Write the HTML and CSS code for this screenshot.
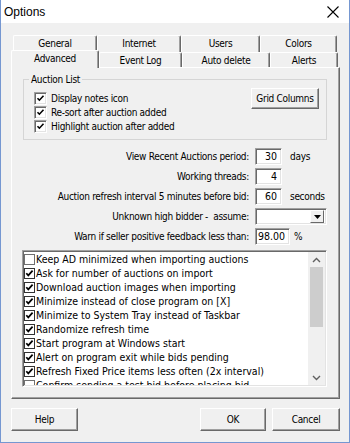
FILE: index.html
```html
<!DOCTYPE html>
<html>
<head>
<meta charset="utf-8">
<link rel="stylesheet" href="styles.css">
</head>
<body>
<div class="window">
  <div class="titlebar">
    <span class="title">Options</span>
    <svg class="close" width="12" height="12" viewBox="0 0 12 12"><path d="M0.5 0.5 L11.5 11.5 M11.5 0.5 L0.5 11.5" stroke="#000" stroke-width="1.1" fill="none"/></svg>
  </div>
  <div class="body">
    <div class="tabrow back">
      <div class="tab t-general">General</div>
      <div class="tab t-internet">Internet</div>
      <div class="tab t-users">Users</div>
      <div class="tab t-colors">Colors</div>
    </div>
    <div class="tabrow front">
      <div class="tab sel t-advanced">Advanced</div>
      <div class="tab t-eventlog">Event Log</div>
      <div class="tab t-autodelete">Auto delete</div>
      <div class="tab t-alerts">Alerts</div>
    </div>
    <div class="panel">
      <fieldset class="group">
        <legend>Auction List</legend>
        <div class="group-inner">
          <div class="checks">
            <div class="chk"><span class="box3d"><svg width="9" height="9" viewBox="0 0 9 9"><path d="M1.5 4.2 L3.4 6.2 L7.5 1.8" stroke="#000" stroke-width="1.6" fill="none"/></svg></span>Display notes icon</div>
            <div class="chk"><span class="box3d"><svg width="9" height="9" viewBox="0 0 9 9"><path d="M1.5 4.2 L3.4 6.2 L7.5 1.8" stroke="#000" stroke-width="1.6" fill="none"/></svg></span>Re-sort after auction added</div>
            <div class="chk"><span class="box3d"><svg width="9" height="9" viewBox="0 0 9 9"><path d="M1.5 4.2 L3.4 6.2 L7.5 1.8" stroke="#000" stroke-width="1.6" fill="none"/></svg></span>Highlight auction after added</div>
          </div>
          <button class="btn grid-btn">Grid Columns</button>
        </div>
      </fieldset>

      <div class="form">
        <div class="frow"><span class="flabel">View Recent Auctions period:</span><span class="field w-small">30</span><span class="unit">days</span></div>
        <div class="frow"><span class="flabel">Working threads:</span><span class="field w-small">4</span></div>
        <div class="frow"><span class="flabel">Auction refresh interval 5 minutes before bid:</span><span class="field w-small">60</span><span class="unit">seconds</span></div>
        <div class="frow"><span class="flabel">Unknown high bidder -&nbsp; assume:</span><span class="field combo"><span class="combo-btn"><svg width="7" height="4" viewBox="0 0 7 4"><path d="M0 0 H7 L3.5 4 Z" fill="#000"/></svg></span></span></div>
        <div class="frow"><span class="flabel">Warn if seller positive feedback less than:</span><span class="field w-pct">98.00</span><span class="unit pct">%</span></div>
      </div>

      <div class="listbox">
        <div class="items">
          <div class="item"><span class="lbox off"></span>Keep AD minimized when importing auctions</div>
          <div class="item"><span class="lbox"><svg width="9" height="9" viewBox="0 0 9 9"><path d="M1.3 4.2 L3.3 6.4 L7.6 1.6" stroke="#000" stroke-width="1.7" fill="none"/></svg></span>Ask for number of auctions on import</div>
          <div class="item"><span class="lbox"><svg width="9" height="9" viewBox="0 0 9 9"><path d="M1.3 4.2 L3.3 6.4 L7.6 1.6" stroke="#000" stroke-width="1.7" fill="none"/></svg></span>Download auction images when importing</div>
          <div class="item"><span class="lbox"><svg width="9" height="9" viewBox="0 0 9 9"><path d="M1.3 4.2 L3.3 6.4 L7.6 1.6" stroke="#000" stroke-width="1.7" fill="none"/></svg></span>Minimize instead of close program on [X]</div>
          <div class="item"><span class="lbox"><svg width="9" height="9" viewBox="0 0 9 9"><path d="M1.3 4.2 L3.3 6.4 L7.6 1.6" stroke="#000" stroke-width="1.7" fill="none"/></svg></span>Minimize to System Tray instead of Taskbar</div>
          <div class="item"><span class="lbox"><svg width="9" height="9" viewBox="0 0 9 9"><path d="M1.3 4.2 L3.3 6.4 L7.6 1.6" stroke="#000" stroke-width="1.7" fill="none"/></svg></span>Randomize refresh time</div>
          <div class="item"><span class="lbox"><svg width="9" height="9" viewBox="0 0 9 9"><path d="M1.3 4.2 L3.3 6.4 L7.6 1.6" stroke="#000" stroke-width="1.7" fill="none"/></svg></span>Start program at Windows start</div>
          <div class="item"><span class="lbox"><svg width="9" height="9" viewBox="0 0 9 9"><path d="M1.3 4.2 L3.3 6.4 L7.6 1.6" stroke="#000" stroke-width="1.7" fill="none"/></svg></span>Alert on program exit while bids pending</div>
          <div class="item"><span class="lbox"><svg width="9" height="9" viewBox="0 0 9 9"><path d="M1.3 4.2 L3.3 6.4 L7.6 1.6" stroke="#000" stroke-width="1.7" fill="none"/></svg></span>Refresh Fixed Price items less often (2x interval)</div>
          <div class="item"><span class="lbox off"></span>Confirm sending a test bid before placing bid</div>
        </div>
        <div class="vscroll">
          <div class="sb-btn"><svg width="9" height="6" viewBox="0 0 9 6"><path d="M1 5 L4.5 1.5 L8 5" stroke="#606060" stroke-width="1.4" fill="none"/></svg></div>
          <div class="thumb"></div>
          <div class="sb-track"></div>
          <div class="sb-btn"><svg width="9" height="6" viewBox="0 0 9 6"><path d="M1 1 L4.5 4.5 L8 1" stroke="#606060" stroke-width="1.4" fill="none"/></svg></div>
        </div>
      </div>
    </div>

    <div class="buttons">
      <button class="btn b-help">Help</button>
      <button class="btn b-ok">OK</button>
      <button class="btn b-cancel">Cancel</button>
    </div>
  </div>
</div>
</body>
</html>
```
FILE: styles.css
```css
html, body {
  margin: 0;
  padding: 0;
  background: #ffffff;
}

.window {
  width: 350px;
  height: 443px;
  box-sizing: border-box;
  border: 1px solid #7597d1;
  border-top: none;
  display: flex;
  flex-direction: column;
  font-family: "DejaVu Sans Condensed", "Liberation Sans", Arial, sans-serif;
  font-size: 10px;
  letter-spacing: -0.3px;
  color: #000;
}

.titlebar {
  height: 23px;
  flex: none;
  background: #ffffff;
  display: flex;
  align-items: center;
  padding-left: 3px;
}

.title {
  font-family: "Liberation Sans", Arial, sans-serif;
  font-size: 12px;
  letter-spacing: 0;
}

.close {
  margin-left: auto;
  margin-right: 10px;
}

.body {
  flex: 1;
  background: #f0f0f0;
  padding: 12px 9px 0 10px;
  display: flex;
  flex-direction: column;
}

/* Tabs */
.tabrow {
  display: flex;
  flex: none;
}

.tabrow.back {
  height: 17px;
  padding-left: 2px;
}

.tabrow.front {
  height: 15px;
  align-items: flex-start;
}

.tab {
  box-sizing: border-box;
  height: 17px;
  border-top: 1px solid #ffffff;
  border-left: 1px solid #ffffff;
  border-right: 1px solid #696969;
  border-radius: 2px 2px 0 0;
  box-shadow: inset -1px 0 #a0a0a0;
  background: #f0f0f0;
  display: flex;
  align-items: center;
  justify-content: center;
  padding-bottom: 1px;
}

.front .tab {
  height: 15px;
  padding-bottom: 0;
}

.front .tab.sel {
  height: 18px;
  margin-top: -2px;
  position: relative;
  z-index: 1;
  padding-bottom: 2px;
}

.t-general { width: 84px; }
.t-internet { width: 84px; }
.t-users { width: 79px; }
.t-colors { width: 77px; }
.t-advanced { width: 88px; }
.t-eventlog { width: 83px; }
.t-autodelete { width: 88px; }
.t-alerts { width: 68px; }

/* Panel */
.panel {
  flex: none;
  height: 332px;
  box-sizing: border-box;
  border: 1px solid #ffffff;
  border-right-color: #696969;
  border-bottom-color: #696969;
  box-shadow: inset -1px -1px #a0a0a0;
  display: flex;
  flex-direction: column;
}

.group {
  margin: 5px 12px 0 11px;
  padding: 0 7px 6px 0;
  border: 1px solid #d5d5d5;
  min-width: 0;
}

.group legend {
  margin-left: 5px;
  padding: 0 2px;
  line-height: 13px;
}

.group-inner {
  display: flex;
  justify-content: space-between;
  align-items: flex-start;
}

.checks {
  margin: 5px 0 0 10px;
}

.chk {
  display: flex;
  align-items: center;
  height: 14px;
  gap: 4px;
  white-space: nowrap;
}

.box3d {
  width: 13px;
  height: 13px;
  box-sizing: border-box;
  background: #ffffff;
  border: 1px solid;
  border-color: #a0a0a0 #ffffff #ffffff #a0a0a0;
  box-shadow: inset 1px 1px #696969, inset -1px -1px #e3e3e3;
  display: flex;
  align-items: center;
  justify-content: center;
}

.btn {
  box-sizing: border-box;
  background: #f0f0f0;
  border: 1px solid;
  border-color: #ffffff #696969 #696969 #ffffff;
  box-shadow: inset -1px -1px #a0a0a0;
  font: inherit;
  letter-spacing: inherit;
  color: #000;
  padding: 0;
  border-radius: 0;
  white-space: nowrap;
}

.grid-btn {
  width: 68px;
  height: 21px;
  margin-top: 2px;
}

/* Form rows */
.form {
  margin-top: 8px;
}

.frow {
  display: flex;
  align-items: center;
  height: 17px;
  margin-bottom: 3px;
}

.flabel {
  width: 237px;
  text-align: right;
  margin-right: 6px;
  white-space: nowrap;
}

.field {
  height: 17px;
  box-sizing: border-box;
  background: #ffffff;
  border: 1px solid;
  border-color: #a0a0a0 #ffffff #ffffff #a0a0a0;
  box-shadow: inset 1px 1px #696969, inset -1px -1px #e3e3e3;
  text-align: right;
  padding-right: 4px;
  line-height: 15px;
  font-size: 10.5px;
  letter-spacing: 0;
}

.w-small { width: 27px; }
.w-pct { width: 35px; }

.combo {
  width: 72px;
  display: flex;
  justify-content: flex-end;
  align-items: center;
  padding-right: 2px;
}

.combo-btn {
  width: 14px;
  height: 13px;
  box-sizing: border-box;
  background: #f0f0f0;
  border: 1px solid;
  border-color: #ffffff #696969 #696969 #ffffff;
  display: flex;
  align-items: center;
  justify-content: center;
}

.unit {
  margin-left: 8px;
}

.unit.pct {
  margin-left: 4px;
}

/* List box */
.listbox {
  margin: 2px 0 0 10px;
  width: 305px;
  height: 137px;
  box-sizing: border-box;
  background: #ffffff;
  border: 1px solid;
  border-color: #a0a0a0 #ffffff #ffffff #a0a0a0;
  box-shadow: inset 1px 1px #696969, inset -1px -1px #e3e3e3;
  padding: 1px;
  display: flex;
}

.items {
  flex: 1;
  overflow: hidden;
  font-size: 10.5px;
  letter-spacing: 0;
}

.item {
  display: flex;
  align-items: center;
  height: 14px;
  gap: 1px;
  white-space: nowrap;
}

.lbox {
  width: 11px;
  height: 11px;
  flex: none;
  box-sizing: border-box;
  border: 1px solid #333333;
  background: #ffffff;
  display: flex;
  align-items: center;
  justify-content: center;
}

.lbox.off {
  border-color: #707070;
}

.vscroll {
  width: 17px;
  flex: none;
  background: #f0f0f0;
  display: flex;
  flex-direction: column;
}

.sb-btn {
  height: 15px;
  display: flex;
  align-items: center;
  justify-content: center;
}

.thumb {
  height: 60px;
  margin: 0 2px;
  background: #cdcdcd;
}

.sb-track {
  flex: 1;
}

/* Bottom buttons */
.buttons {
  display: flex;
  margin-top: 9px;
  height: 23px;
}

.buttons .btn {
  height: 23px;
}

.b-help { width: 67px; }
.b-ok { width: 66px; margin-left: auto; }
.b-cancel { width: 68px; margin-left: 6px; }
```
